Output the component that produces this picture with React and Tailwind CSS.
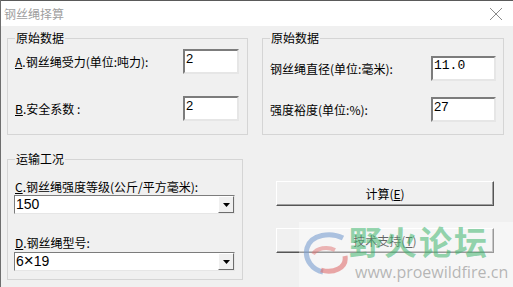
import React from 'react';

const cjk = "font-['SimSun','Noto_Sans_CJK_SC',sans-serif]";

function Field({ value, mono = false, className = '' }) {
    return (
        <div className={`h-[25px] w-[56px] bg-white border-2 border-t-[#7c7c7c] border-l-[#7c7c7c] border-r-[#e6e6e6] border-b-[#e6e6e6] pl-[1px] text-[13px] leading-[16px] text-black ${mono ? "font-['Liberation_Mono',monospace]" : "font-['Liberation_Sans',sans-serif]"} ${className}`}>
            {value}
        </div>
    );
}

function Combo({ children }) {
    return (
        <div className="flex h-[19px] w-[221px] bg-white border border-t-[#7c7c7c] border-l-[#7c7c7c] border-r-[#e6e6e6] border-b-[#e6e6e6]">
            <div className="flex-1 pl-[1px] text-[14px] leading-[16px] font-['Liberation_Sans',sans-serif] text-black">{children}</div>
            <div className="w-[16px] h-full flex items-center justify-center bg-[#f0f0f0] border border-t-white border-l-white border-r-[#6d6d6d] border-b-[#6d6d6d]">
                <svg width="7" height="4" viewBox="0 0 7 4"><path d="M0 0h7L3.5 4z" fill="#000" /></svg>
            </div>
        </div>
    );
}

function Group({ title, className = '', children }) {
    return (
        <fieldset className={`border border-[#d5d5d5] px-[7px] ${className}`}>
            <legend className="px-[1px] text-[12px] leading-[14px] text-black">{title}</legend>
            {children}
        </fieldset>
    );
}

function Button({ children, className = '' }) {
    return (
        <div className={`h-[25px] w-[218px] flex items-center justify-center bg-[#f0f0f0] border border-t-white border-l-white border-r-[#555] border-b-[#555] shadow-[inset_-1px_-1px_0_#a0a0a0] text-[12px] text-black ${className}`}>
            {children}
        </div>
    );
}

export default function App() {
    return (
        <div className={`relative w-[513px] h-[287px] overflow-hidden flex flex-col bg-[#f0f0f0] border-l border-[#6e6e6e] ${cjk}`}>
            <div className="h-[26px] shrink-0 bg-white flex items-center justify-between pl-[3px] pr-[10px] border-t border-[#5a5a5a]">
                <span className="text-[12px] text-[#a0a0a0]">钢丝绳择算</span>
                <svg width="14" height="14" viewBox="0 0 14 14"><path d="M1 1L13 13M13 1L1 13" stroke="#8a8a8a" strokeWidth="1" /></svg>
            </div>

            <div className="flex-1 pt-[5px] pl-[6px]">
                <div className="flex">
                    <Group title="原始数据" className="w-[241px] h-[104px]">
                        <div className="flex items-center justify-between mt-[4px] pr-[1px]">
                            <span className="text-[12px]"><span className="underline">A</span>.钢丝绳受力(单位:吨力):</span>
                            <Field value="2" />
                        </div>
                        <div className="flex items-center justify-between mt-[22px] pr-[1px]">
                            <span className="text-[12px]"><span className="underline">B</span>.安全系数 :</span>
                            <Field value="2" />
                        </div>
                    </Group>
                    <Group title="原始数据" className="ml-[14px] w-[242px] h-[104px]">
                        <div className="flex items-center justify-between mt-[11px]">
                            <span className="text-[12px]">钢丝绳直径(单位:毫米):</span>
                            <Field value="11.0" mono className="w-[65px]" />
                        </div>
                        <div className="flex items-center justify-between mt-[16px]">
                            <span className="text-[12px]">强度裕度(单位:%):</span>
                            <Field value="27" className="w-[65px]" />
                        </div>
                    </Group>
                </div>

                <div className="flex mt-[17px]">
                    <Group title="运输工况" className="w-[235px] h-[128px]">
                        <div className="mt-[14px] text-[12px] leading-[14px]"><span className="underline">C</span>.钢丝绳强度等级(公斤/平方毫米):</div>
                        <div className="mt-[1px] -ml-[1px]"><Combo>150</Combo></div>
                        <div className="mt-[22px] text-[12px] leading-[14px]"><span className="underline">D</span>.钢丝绳型号:</div>
                        <div className="mt-[2px] -ml-[1px]"><Combo>6<span className="text-[17px] font-light">×</span>19</Combo></div>
                    </Group>
                    <div className="ml-[33px] pt-[29px] flex flex-col">
                        <Button>计算(<span className="underline">E</span>)</Button>
                        <Button className="mt-[22px]">技术支持(<span className="underline">T</span>)</Button>
                    </div>
                </div>
            </div>

            <div className="absolute left-[298px] top-[222px] w-[215px] h-[65px] bg-white/40">
                <svg className="absolute left-[4px] top-[8px]" width="46" height="50" viewBox="0 0 46 50">
                    <path d="M40 8C28 2 8 4 4 18c-3 12 6 22 16 24" fill="none" stroke="#7a9ed0" strokeWidth="5" opacity="0.6" />
                    <path d="M18 40C30 44 44 38 42 26" fill="none" stroke="#e07070" strokeWidth="5" opacity="0.6" />
                    <path d="M10 24c4-6 14-8 22-4" fill="none" stroke="#e07070" strokeWidth="4" opacity="0.5" />
                </svg>
                <div className="absolute left-[50px] top-[1px] text-[33px] leading-[36px] font-bold text-[#3bb36a]/55 tracking-[2px]">野火论坛</div>
                <div className="absolute left-[56px] top-[40px] text-[16px] leading-[20px] text-[#8a8a8a]/60 font-['Open_Sans',sans-serif]">www.proewildfire.cn</div>
            </div>
        </div>
    );
}
